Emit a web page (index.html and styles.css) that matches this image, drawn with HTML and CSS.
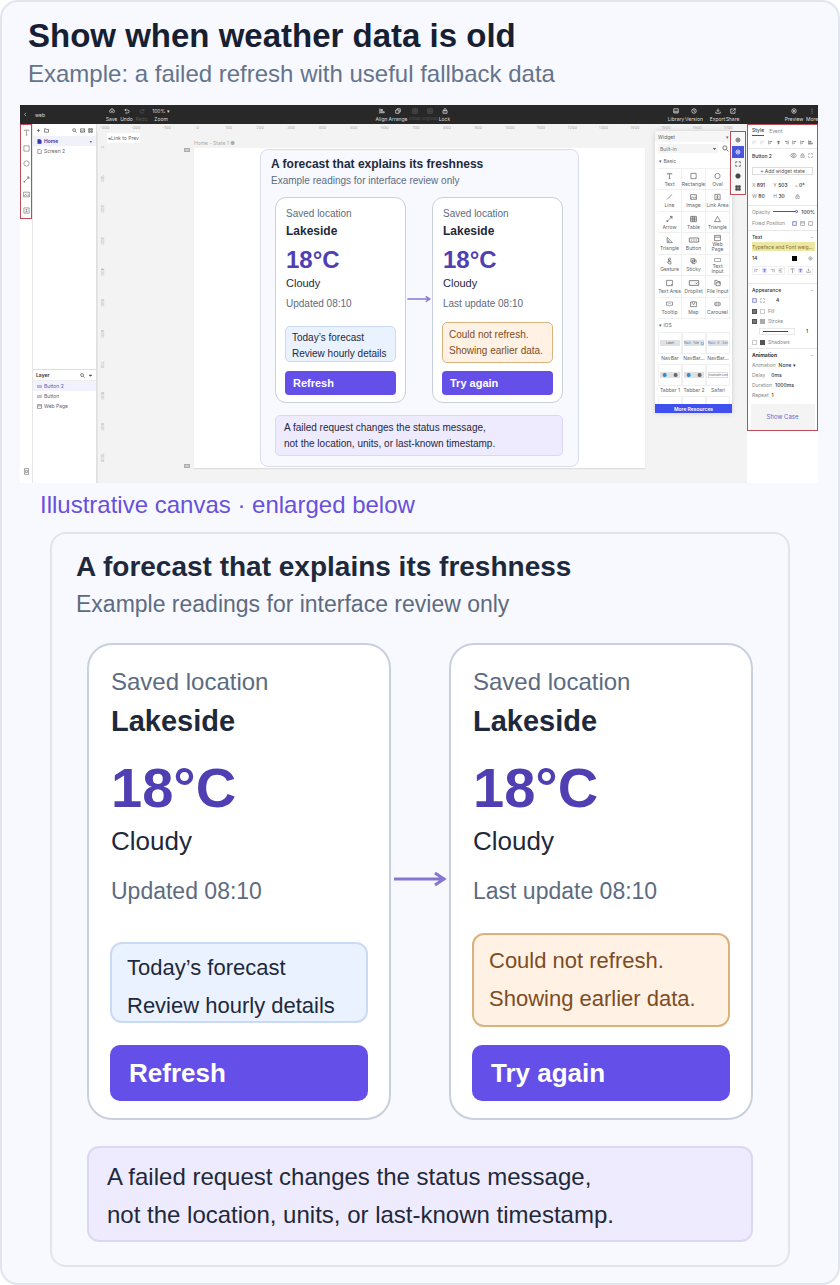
FILE: index.html
```html
<!DOCTYPE html>
<html lang="en">
<head>
<meta charset="utf-8">
<meta name="viewport" content="width=device-width, initial-scale=1">
<title>Show when weather data is old</title>
<link rel="stylesheet" href="styles.css">
</head>
<body>
<svg class="sprite" aria-hidden="true">
  <symbol id="back" viewBox="0 0 24 24"><path d="M15 4l-8 8 8 8"/></symbol>
  <symbol id="cloud" viewBox="0 0 24 24"><path d="M7 18H6a4 4 0 0 1 0-9 6 6 0 0 1 12 0 4 4 0 0 1 0 9h-1M12 21V11M9 14l3-3 3 3"/></symbol>
  <symbol id="undo" viewBox="0 0 24 24"><path d="M8 3L3 8l5 5M3 8h11a6 6 0 0 1 0 12H5"/></symbol>
  <symbol id="redo" viewBox="0 0 24 24"><path d="M16 3l5 5-5 5M21 8H10a6 6 0 0 0 0 12h9"/></symbol>
  <symbol id="align" viewBox="0 0 24 24"><path d="M3 2v20M7 6h7v4H7zM7 15h14v4H7z"/></symbol>
  <symbol id="copy" viewBox="0 0 24 24"><path d="M3 8h13v13H3zM8 8V3h13v13h-5"/></symbol>
  <symbol id="group" viewBox="0 0 24 24"><path d="M3 3h18v18H3zM3 12h18M12 3v18"/></symbol>
  <symbol id="lock" viewBox="0 0 24 24"><path d="M4 10h16v11H4zM8 10V6a4 4 0 0 1 8 0v4M12 14v3"/></symbol>
  <symbol id="library" viewBox="0 0 24 24"><path d="M3 3h18v16H3zM3 13h18M8 19v3M16 19v3"/></symbol>
  <symbol id="clock" viewBox="0 0 24 24"><circle cx="12" cy="12" r="9"/><path d="M12 6v6l4 3"/></symbol>
  <symbol id="download" viewBox="0 0 24 24"><path d="M12 2v12M7 9l5 5 5-5M3 15v6h18v-6"/></symbol>
  <symbol id="share" viewBox="0 0 24 24"><path d="M11 4H3v17h17v-8M14 3h7v7M21 3L10 14"/></symbol>
  <symbol id="play" viewBox="0 0 24 24"><circle cx="12" cy="12" r="9"/><path d="M10 8l6 4-6 4z"/></symbol>
  <symbol id="more" viewBox="0 0 24 24"><path d="M12 3v3M12 11v3M12 19v3"/></symbol>
  <symbol id="text" viewBox="0 0 24 24"><path d="M4 7V4h16v3M12 4v17M9 21h6"/></symbol>
  <symbol id="rect" viewBox="0 0 24 24"><path d="M3 3h18v18H3z"/></symbol>
  <symbol id="oval" viewBox="0 0 24 24"><circle cx="12" cy="12" r="9"/></symbol>
  <symbol id="line" viewBox="0 0 24 24"><path d="M4 20L20 4"/></symbol>
  <symbol id="arrow" viewBox="0 0 24 24"><path d="M4 20L20 4M14 3h7v7zM3 17v4h4z"/></symbol>
  <symbol id="image" viewBox="0 0 24 24"><path d="M2 4h20v16H2zM3 17l6-5 5 4 3-3 5 4M16 8h2"/></symbol>
  <symbol id="area" viewBox="0 0 24 24"><path d="M3 3h18v18H3zM12 8v8M9 10l3-3 3 3M8 16h8"/></symbol>
  <symbol id="table" viewBox="0 0 24 24"><path d="M2 3h20v18H2zM2 9h20M2 15h20M9 3v18M15 3v18"/></symbol>
  <symbol id="tri" viewBox="0 0 24 24"><path d="M12 3l10 18H2z"/></symbol>
  <symbol id="rtri" viewBox="0 0 24 24"><path d="M4 3v18h18zM8 13v4h4"/></symbol>
  <symbol id="button" viewBox="0 0 32 24"><path d="M2 6h28v12H2zM7 12h4M14 12h4M21 12h4"/></symbol>
  <symbol id="web" viewBox="0 0 24 24"><path d="M2 3h20v18H2zM2 9h20"/></symbol>
  <symbol id="gesture" viewBox="0 0 24 24"><circle cx="12" cy="6" r="4"/><path d="M10 6v10l-4-2v4l4 4h7v-8l-7-2"/></symbol>
  <symbol id="sticky" viewBox="0 0 24 24"><path d="M3 4h13v12H3zM8 9h13v8l-4 4H8zM12 13h5"/></symbol>
  <symbol id="input" viewBox="0 0 32 24"><path d="M2 5h28v14H2z"/></symbol>
  <symbol id="textarea" viewBox="0 0 24 24"><path d="M2 3h20v18H2zM17 19l3-3"/></symbol>
  <symbol id="drop" viewBox="0 0 32 24"><path d="M2 5h28v14H2zM20 11l3 3 3-3"/></symbol>
  <symbol id="file" viewBox="0 0 24 24"><path d="M3 19V3h7l2 4h9v8M7 11v10h14V11z"/></symbol>
  <symbol id="tooltip" viewBox="0 0 28 24"><path d="M2 4h24v13h-9l-3 4-3-4H2zM8 10h2M13 10h2M18 10h2"/></symbol>
  <symbol id="map" viewBox="0 0 24 24"><path d="M8 5H2v16h20V5h-6M12 15s-4-5-4-8a4 4 0 0 1 8 0c0 3-4 8-4 8z"/></symbol>
  <symbol id="carousel" viewBox="0 0 28 24"><path d="M8 5h12v14H8zM8 7H5a4 4 0 0 0 0 10h3M20 7h3a4 4 0 0 1 0 10h-3M11 12h6"/></symbol>
  <symbol id="search" viewBox="0 0 24 24"><circle cx="10" cy="10" r="7"/><path d="M15 15l7 7"/></symbol>
  <symbol id="folder" viewBox="0 0 24 24"><path d="M2 20V4h8l2 3h10v13z"/></symbol>
  <symbol id="plus" viewBox="0 0 24 24"><path d="M12 4v16M4 12h16"/></symbol>
  <symbol id="grid" viewBox="0 0 24 24"><path d="M3 3h7v7H3zM14 3h7v7h-7zM3 14h7v7H3zM14 14h7v7h-7z"/></symbol>
  <symbol id="page" viewBox="0 0 24 24"><path d="M4 2h11l5 5v15H4z"/></symbol>
  <symbol id="notes" viewBox="0 0 24 24"><path d="M5 2h14v20H5zM9 8h6v8H9z"/></symbol>
  <symbol id="caret" viewBox="0 0 24 24"><path d="M6 10l6 6 6-6z" fill="currentColor"/></symbol>
  <symbol id="eye" viewBox="0 0 24 24"><path d="M1 12s4-7 11-7 11 7 11 7-4 7-11 7S1 12 1 12z"/><circle cx="12" cy="12" r="3"/></symbol>
  <symbol id="frame" viewBox="0 0 24 24"><path d="M9 3H3v6M15 3h6v6M9 21H3v-6M15 21h6v-6"/></symbol>
  <symbol id="gear" viewBox="0 0 24 24"><circle cx="12" cy="12" r="8"/><circle cx="12" cy="12" r="3"/></symbol>
  <symbol id="disc" viewBox="0 0 24 24"><circle cx="12" cy="12" r="9" fill="currentColor"/></symbol>
  <symbol id="lines" viewBox="0 0 24 24"><path d="M3 5h18M3 12h12M3 19h18"/></symbol>
  <symbol id="al" viewBox="0 0 24 24"><path d="M4 3v18M8 7h12M8 15h7"/></symbol>
  <symbol id="ac" viewBox="0 0 24 24"><path d="M12 3v18M4 8h16M7 15h10"/></symbol>
  <symbol id="ar" viewBox="0 0 24 24"><path d="M20 3v18M4 7h12M9 15h7"/></symbol>
</svg>

<main class="sheet">
  <header class="intro">
    <h1>Show when weather data is old</h1>
    <p>Example: a failed refresh with useful fallback data</p>
  </header>

  <section class="editor" aria-label="Design editor">
    <div class="topbar">
      <button class="topbar-back" aria-label="Back"><svg class="ico ico-s"><use href="#back"/></svg></button>
      <span class="topbar-name">web</span>
      <div class="tools tools-edit">
        <button><svg class="ico"><use href="#cloud"/></svg>Save</button>
        <button><svg class="ico"><use href="#undo"/></svg>Undo</button>
        <button class="dim"><svg class="ico"><use href="#redo"/></svg>Redo</button>
        <button class="wide"><span>100% ▾</span>Zoom</button>
      </div>
      <div class="tools tools-arrange">
        <button><svg class="ico"><use href="#align"/></svg>Align</button>
        <button class="mid"><svg class="ico"><use href="#copy"/></svg>Arrange</button>
        <button class="dim small"><svg class="ico"><use href="#group"/></svg>Group</button>
        <button class="dim small"><svg class="ico"><use href="#group"/></svg>Ungroup</button>
        <button><svg class="ico"><use href="#lock"/></svg>Lock</button>
      </div>
      <div class="tools tools-share">
        <button class="mid"><svg class="ico"><use href="#library"/></svg>Library</button>
        <button class="mid"><svg class="ico"><use href="#clock"/></svg>Version</button>
      </div>
      <div class="tools tools-export">
        <button><svg class="ico"><use href="#download"/></svg>Export</button>
        <button><svg class="ico"><use href="#share"/></svg>Share</button>
      </div>
      <div class="tools tools-view">
        <button class="mid"><svg class="ico"><use href="#play"/></svg>Preview</button>
        <button class="mid"><svg class="ico"><use href="#more"/></svg>More</button>
      </div>
    </div>

    <div class="workspace">
      <div class="toolbar">
        <div class="toolbar-main marked">
          <button aria-label="Text"><svg class="ico"><use href="#text"/></svg></button>
          <button aria-label="Rectangle"><svg class="ico"><use href="#rect"/></svg></button>
          <button aria-label="Oval"><svg class="ico"><use href="#oval"/></svg></button>
          <button aria-label="Arrow"><svg class="ico"><use href="#arrow"/></svg></button>
          <button aria-label="Image"><svg class="ico"><use href="#image"/></svg></button>
          <button aria-label="Link area"><svg class="ico"><use href="#area"/></svg></button>
        </div>
        <button class="toolbar-end" aria-label="Notes"><svg class="ico"><use href="#notes"/></svg></button>
      </div>

      <div class="side">
        <div class="side-head">
          <svg class="ico ico-s"><use href="#plus"/></svg><svg class="ico ico-s"><use href="#folder"/></svg>
          <span class="push"></span>
          <svg class="ico ico-s"><use href="#search"/></svg><svg class="ico ico-s"><use href="#image"/></svg><svg class="ico ico-s"><use href="#grid"/></svg>
        </div>
        <button class="side-item current"><svg class="ico ico-s solid"><use href="#page"/></svg>Home<span class="push">•</span></button>
        <button class="side-item"><svg class="ico ico-s"><use href="#page"/></svg>Screen 2</button>
        <div class="layers">
          <div class="side-head side-title"><b>Layer</b><span class="push"></span><svg class="ico ico-s"><use href="#search"/></svg><svg class="ico ico-s"><use href="#caret"/></svg></div>
          <button class="side-item picked"><svg class="ico ico-s"><use href="#button"/></svg>Button 2</button>
          <button class="side-item"><svg class="ico ico-s"><use href="#button"/></svg>Button</button>
          <button class="side-item"><svg class="ico ico-s"><use href="#web"/></svg>Web Page</button>
        </div>
      </div>

      <div class="canvas">
        <div class="ruler-x"><i>-300</i><i>-200</i><i>-100</i><i>0</i><i>100</i><i>200</i><i>300</i><i>400</i><i>500</i><i>600</i><i>700</i><i>800</i><i>900</i><i>1000</i><i>1100</i><i>1200</i><i>1300</i><i>1400</i><i>1500</i><i>1600</i><i>1700</i></div>
        <div class="ruler-y"><i>0</i><i>100</i><i>200</i><i>300</i><i>400</i><i>500</i><i>600</i><i>700</i><i>800</i><i>900</i><i>1000</i></div>
        <div class="stage">
          <div class="stage-top">
            <button class="link-prev">◂Link to Prev</button>
            <span class="state-name">Home - State 1 ●</span>
          </div>
          <div class="board-row">
            <div class="pins"><span></span><span></span></div>
            <div class="board">
              <article class="forecast mini">
                <h2>A forecast that explains its freshness</h2>
                <p class="lead">Example readings for interface review only</p>
                <div class="pair">
                  <section class="card">
                    <p class="place-label">Saved location</p>
                    <h3>Lakeside</h3>
                    <p class="temp">18°C</p>
                    <p class="sky">Cloudy</p>
                    <p class="stamp">Updated 08:10</p>
                    <div class="box info"><p>Today’s forecast</p><p>Review hourly details</p></div>
                    <button class="action">Refresh</button>
                  </section>
                  <svg class="flow" viewBox="0 0 58 24" aria-hidden="true"><path d="M3 9h51M44 3l9 6-9 6"/></svg>
                  <section class="card">
                    <p class="place-label">Saved location</p>
                    <h3>Lakeside</h3>
                    <p class="temp">18°C</p>
                    <p class="sky">Cloudy</p>
                    <p class="stamp">Last update 08:10</p>
                    <div class="box warn"><p>Could not refresh.</p><p>Showing earlier data.</p></div>
                    <button class="action">Try again</button>
                  </section>
                </div>
                <div class="note"><p>A failed request changes the status message,</p><p>not the location, units, or last-known timestamp.</p></div>
              </article>
            </div>
          </div>
        </div>

        <div class="palette">
          <div class="palette-head"><span>Widget</span><span>▾</span></div>
          <div class="palette-find"><select aria-label="Widget library"><option>Built-in</option></select><svg class="ico"><use href="#search"/></svg></div>
          <div class="palette-group">▾ Basic</div>
          <div class="widgets">
            <button><svg class="ico"><use href="#text"/></svg>Text</button>
            <button><svg class="ico"><use href="#rect"/></svg>Rectangle</button>
            <button><svg class="ico"><use href="#oval"/></svg>Oval</button>
            <button><svg class="ico"><use href="#line"/></svg>Line</button>
            <button><svg class="ico"><use href="#image"/></svg>Image</button>
            <button><svg class="ico"><use href="#area"/></svg>Link Area</button>
            <button><svg class="ico"><use href="#arrow"/></svg>Arrow</button>
            <button><svg class="ico"><use href="#table"/></svg>Table</button>
            <button><svg class="ico"><use href="#tri"/></svg>Triangle</button>
            <button><svg class="ico"><use href="#rtri"/></svg>Triangle</button>
            <button><svg class="ico ico-w"><use href="#button"/></svg>Button</button>
            <button><svg class="ico"><use href="#web"/></svg>Web<br>Page</button>
            <button><svg class="ico"><use href="#gesture"/></svg>Gesture</button>
            <button><svg class="ico"><use href="#sticky"/></svg>Sticky</button>
            <button><svg class="ico"><use href="#input"/></svg>Text<br>Input</button>
            <button><svg class="ico"><use href="#textarea"/></svg>Text Area</button>
            <button><svg class="ico ico-w"><use href="#drop"/></svg>Droplist</button>
            <button><svg class="ico"><use href="#file"/></svg>File Input</button>
            <button><svg class="ico"><use href="#tooltip"/></svg>Tooltip</button>
            <button><svg class="ico"><use href="#map"/></svg>Map</button>
            <button><svg class="ico"><use href="#carousel"/></svg>Carousel</button>
          </div>
          <div class="palette-group">▾ iOS</div>
          <div class="bars">
            <button><span class="thumb"><i>Label</i></span>NavBar</button>
            <button><span class="thumb"><i class="blue">Back</i><i>Title</i><i class="pale"></i></span>NavBar...</button>
            <button><span class="thumb"><i class="blue">Back</i><i>☰</i><i class="blue">Edit</i></span>NavBar...</button>
            <button><span class="thumb"><i class="dot blue">●</i><i class="dot">●</i></span>Tabbar 1</button>
            <button><span class="thumb"><i class="dot blue">●</i><i class="dot">●</i></span>Tabbar 2</button>
            <button><span class="thumb safari"><i>example.com</i></span>Safari</button>
          </div>
          <div class="bars-rest"><span></span><span></span><span></span></div>
          <button class="palette-more">More Resources</button>
        </div>

        <div class="switcher marked">
          <button aria-label="Assets"><svg class="ico"><use href="#gear"/></svg></button>
          <button class="on" aria-label="Widgets"><svg class="ico"><use href="#gear"/></svg></button>
          <button aria-label="Frames"><svg class="ico"><use href="#frame"/></svg></button>
          <button aria-label="Styles"><svg class="ico"><use href="#disc"/></svg></button>
          <button aria-label="Masters"><svg class="ico solid"><use href="#grid"/></svg></button>
        </div>
      </div>

      <div class="props">
        <div class="props-main marked">
          <div class="prow tabs"><b>Style</b><span>Event</span></div>
          <div class="prow tall spread"><svg class="ico ico-s faint"><use href="#al"/></svg><svg class="ico ico-s faint"><use href="#al"/></svg><svg class="ico ico-s"><use href="#al"/></svg><svg class="ico ico-s"><use href="#ac"/></svg><svg class="ico ico-s"><use href="#ar"/></svg><svg class="ico ico-s"><use href="#al"/></svg><svg class="ico ico-s"><use href="#al"/></svg><svg class="ico ico-s"><use href="#align"/></svg></div>
          <div class="prow xtall ruled"><span class="name">Button 2</span><span class="push"></span><svg class="ico"><use href="#eye"/></svg><svg class="ico ico-s"><use href="#lock"/></svg><svg class="ico ico-s"><use href="#frame"/></svg></div>
          <div class="prow add"><button>+ Add widget state</button></div>
          <div class="prow tall thirds"><span>X <b>891</b></span><span>Y <b>503</b></span><span>⦣ <b>0°</b></span></div>
          <div class="prow thirds end"><span>W <b>80</b></span><span>H <b>30</b></span><span><svg class="ico ico-s"><use href="#lock"/></svg></span></div>
          <div class="prow tall ruled"><label for="opacity">Opacity</label><input id="opacity" type="range" value="100"><b>100%</b></div>
          <div class="prow tall last"><span>Fixed Position</span><span class="push"></span><svg class="ico ico-s tint"><use href="#rect"/></svg><svg class="ico ico-s"><use href="#web"/></svg><svg class="ico ico-s"><use href="#rect"/></svg></div>
          <div class="prow tall ruled"><b>Text</b><span class="push">–</span></div>
          <div class="prow typeface">Typeface and Font weig...</div>
          <div class="prow xtall"><b>14</b><span class="push"></span><span class="swatch black"></span><svg class="ico ico-s gapped"><use href="#gear"/></svg></div>
          <div class="prow aligns"><span class="seg"><svg class="ico ico-s"><use href="#al"/></svg><svg class="ico ico-s tint"><use href="#ac"/></svg><svg class="ico ico-s"><use href="#ar"/></svg><svg class="ico ico-s"><use href="#lines"/></svg></span><span class="seg"><svg class="ico ico-s"><use href="#text"/></svg><svg class="ico ico-s tint"><use href="#ac"/></svg><svg class="ico ico-s"><use href="#download"/></svg></span></div>
          <div class="prow tall ruled"><b>Appearance</b><span class="push">–</span></div>
          <div class="prow corners"><svg class="ico ico-s tint"><use href="#rect"/></svg><svg class="ico ico-s"><use href="#frame"/></svg><b class="gapped">4</b></div>
          <div class="prow"><input id="fill" type="checkbox" checked><span class="swatch"></span><label for="fill">Fill</label></div>
          <div class="prow"><input id="stroke" type="checkbox" checked><span class="swatch gray"></span><label for="stroke">Stroke</label></div>
          <div class="prow stroke-line"><span class="dash"></span><b>1</b></div>
          <div class="prow tall"><input id="shadows" type="checkbox"><span class="swatch dark"></span><label for="shadows">Shadows</label></div>
          <div class="prow tall ruled"><b class="strong">Animation</b><span class="push">–</span></div>
          <div class="prow"><span>Animation</span><b>None ▾</b></div>
          <div class="prow"><span>Delay</span><b class="delay">0ms</b></div>
          <div class="prow"><span>Duration</span><b>1000ms</b></div>
          <div class="prow"><span>Repeat</span><b>1</b></div>
          <button class="showcase">Show Case</button>
        </div>
      </div>
    </div>
  </section>

  <p class="caption">Illustrative canvas · enlarged below</p>

  <article class="forecast">
    <h2>A forecast that explains its freshness</h2>
    <p class="lead">Example readings for interface review only</p>
    <div class="pair">
      <section class="card">
        <p class="place-label">Saved location</p>
        <h3>Lakeside</h3>
        <p class="temp">18°C</p>
        <p class="sky">Cloudy</p>
        <p class="stamp">Updated 08:10</p>
        <div class="box info"><p>Today’s forecast</p><p>Review hourly details</p></div>
        <button class="action">Refresh</button>
      </section>
      <svg class="flow" viewBox="0 0 58 24" aria-hidden="true"><path d="M3 9h51M44 3l9 6-9 6"/></svg>
      <section class="card">
        <p class="place-label">Saved location</p>
        <h3>Lakeside</h3>
        <p class="temp">18°C</p>
        <p class="sky">Cloudy</p>
        <p class="stamp">Last update 08:10</p>
        <div class="box warn"><p>Could not refresh.</p><p>Showing earlier data.</p></div>
        <button class="action">Try again</button>
      </section>
    </div>
    <div class="note"><p>A failed request changes the status message,</p><p>not the location, units, or last-known timestamp.</p></div>
  </article>
</main>
</body>
</html>
```
FILE: styles.css
```css
* { box-sizing: border-box; }
body { margin: 0; background: #fff; color: #1e293b; font-family: "Liberation Sans", Arial, sans-serif; }
h1, h2, h3, p { margin: 0; }
button { margin: 0; padding: 0; border: 0; background: none; color: inherit; font: inherit; cursor: pointer; }
.sprite { display: none; }

.sheet { padding: 14px 0 16px; border: 2px solid #e1e5ef; border-radius: 18px; background: #f8f9ff; }
.intro { padding: 0 26px; }
.intro h1 { font-size: 33px; line-height: 40px; color: #172033; }
.intro p { margin-top: 3px; font-size: 24px; line-height: 30px; color: #64748b; }
.caption { margin: 7px 38px 12px; font-size: 24px; line-height: 30px; color: #6750dc; }

/* Forecast panel, in its full size and in the size used on the canvas */
.forecast {
  --line: 2px;
  margin: 0 48px;
  padding: 15px 35px 23px;
  border: var(--line) solid #e0e4ec;
  border-radius: 16px;
  background: #f8f9ff;
}
.forecast h2 { margin-left: -11px; font-size: 28px; line-height: 36px; }
.lead { margin: 4px 0 24px -11px; font-size: 23px; line-height: 30px; color: #5d6b80; }
.pair { display: grid; grid-template-columns: 1fr 58px 1fr; }
.card { display: flex; flex-direction: column; padding: 22px 21px 17px; border: var(--line) solid #c9d0dd; border-radius: 25px; background: #fff; }
.card > p, .card > h3 { padding-left: 1px; }
.place-label { font-size: 24px; line-height: 30px; color: #5d6b80; }
.card h3 { margin-top: 7px; font-size: 29px; line-height: 34px; }
.temp { margin-top: 18px; font-size: 56px; font-weight: 700; line-height: 64px; color: #4f3fb3; }
.sky { margin-top: 5px; font-size: 26px; line-height: 32px; }
.stamp { margin-top: 19px; font-size: 23px; line-height: 30px; color: #5d6b80; }
.box { display: flex; flex-direction: column; gap: 8px; border: var(--line) solid; border-radius: 12px; font-size: 22px; line-height: 30px; }
.info { margin: 36px 0 22px; padding: 9px 15px 0; border-color: #c9daf5; background: #ebf2ff; }
.warn { margin: 27px 0 18px; padding: 11px 15px; border-color: #dab27c; background: #fff1e4; color: #7c4d24; }
.action { padding: 12px 19px; border-radius: 10px; background: #654fe9; color: #fff; font-size: 26px; font-weight: 700; line-height: 32px; text-align: left; }
.flow { width: 100%; align-self: center; fill: none; stroke: #8775d2; stroke-width: 3; }
.note { display: flex; flex-direction: column; gap: 8px; margin-top: 26px; padding: 14px 18px 10px; border: var(--line) solid #ddd7f5; border-radius: 12px; background: #efebfe; font-size: 24px; line-height: 30px; }

.mini { --line: 1px; width: 319px; margin: 0; padding: 7px 15px 10px 14px; border-color: #d9ddeb; border-radius: 8px; }
.mini h2 { margin-left: -4px; font-size: 12px; line-height: 14px; }
.mini .lead { margin: 3px 0 9px -4px; font-size: 10px; line-height: 14px; }
.mini .pair { grid-template-columns: 1fr 26px 1fr; }
.mini .card { padding: 10px 9px 7px; border-radius: 11px; }
.mini .place-label { font-size: 10px; line-height: 12px; }
.mini h3 { margin-top: 4px; font-size: 12px; line-height: 14px; }
.mini .temp { margin-top: 8px; font-size: 24px; line-height: 28px; }
.mini .sky { margin-top: 2px; font-size: 11px; line-height: 14px; }
.mini .stamp { margin-top: 8px; font-size: 10px; line-height: 12px; }
.mini .box { gap: 2px; border-radius: 5px; font-size: 10px; line-height: 14px; }
.mini .info { margin: 16px 0 9px; padding: 4px 6px 0; }
.mini .warn { margin: 12px 0 8px; padding: 5px 6px 4px; }
.mini .action { padding: 5px 8px; border-radius: 4px; font-size: 11px; line-height: 14px; }
.mini .note { gap: 2px; margin-top: 12px; padding: 5px 8px 4px; border-radius: 5px; font-size: 10px; line-height: 14px; }

/* Editor */
.editor { margin: 16px 20px 0 18px; overflow: hidden; font-family: Inter, "Noto Sans", sans-serif; font-size: 5px; line-height: 6px; color: #666; }
.mini { font-family: "Liberation Sans", Arial, sans-serif; color: #1e293b; }
.ico { display: block; flex: none; width: 7px; height: 7px; fill: none; stroke: currentColor; stroke-width: 3; }
.ico-s { width: 5px; height: 5px; }
.ico-w { width: 12px; }
.solid { fill: currentColor; }
.push { margin-left: auto; }
.marked { border: 1px solid #bd4c56; }

.topbar { display: flex; align-items: center; height: 19px; background: #282828; color: #ddd; }
.topbar-back { width: 12px; padding-left: 3px; }
.topbar-name { width: 72px; padding-left: 3px; }
.tools { display: flex; }
.tools button { display: flex; flex-direction: column; align-items: center; gap: 2px; width: 15px; white-space: nowrap; }
.tools .ico { width: 6px; height: 6px; }
.tools .dim { color: #555; }
.tools .small { font-size: 4px; }
.tools .mid { width: 18px; }
.tools .wide { width: 24px; }
.tools-arrange { margin-left: 201px; }
.tools-share { margin-left: 215px; }
.tools-export { margin-left: 7px; }
.tools-view { margin-left: auto; margin-right: -3px; }

.workspace { display: flex; background: #fff; }
.toolbar { display: flex; flex-direction: column; justify-content: space-between; width: 12px; padding-bottom: 8px; }
.toolbar-main { display: flex; flex-direction: column; justify-content: space-around; height: 95px; }
.toolbar button { display: flex; justify-content: center; }
.toolbar .ico { stroke-width: 2; }
.side { display: flex; flex-direction: column; width: 65px; border-right: 1px solid #e0e0e0; border-left: 1px solid #e6e6e6; }
.side-head { display: flex; align-items: center; gap: 3px; height: 12px; padding: 0 3px; color: #444; }
.side-item { display: flex; align-items: center; gap: 2px; height: 10px; padding: 0 4px; text-align: left; }
.current { background: #f1f1fc; color: #3038a8; font-weight: 600; }
.picked { background: #f1f2fd; color: #5b63a8; }
.layers { display: flex; flex-direction: column; margin: auto 0 72px; border-top: 1px solid #ddd; }
.side-title { height: 11px; border-bottom: 1px solid #eee; }

.canvas { position: relative; flex: 1; display: grid; grid-template-columns: 8px 1fr; grid-template-rows: 9px 1fr; background: #f3f3f3; }
.ruler-x { grid-column: 1 / 3; display: flex; justify-content: space-between; padding: 1px 15px 0 3px; }
.ruler-x i, .ruler-y i { font-size: 4px; font-style: normal; line-height: 6px; color: #aaa; text-align: center; }
.ruler-x i { width: 8px; }
.ruler-y { display: flex; flex-direction: column; justify-content: space-between; padding: 8px 0 19px; border-left: 1px solid #e4e4e4; }
.ruler-y i { height: 12px; writing-mode: vertical-rl; }
.stage { padding-bottom: 15px; }
.stage-top { display: flex; height: 15px; }
.link-prev { width: 33px; height: 10px; margin-left: 2px; background: #fff; white-space: nowrap; }
.state-name { margin: 7px 0 0 54px; color: #aaa; }
.board-row { display: flex; padding-right: 102px; }
.pins { display: flex; flex-direction: column; justify-content: space-between; align-items: flex-end; width: 89px; padding-right: 4px; }
.pins span { width: 6px; height: 4px; border: 1px solid #aaa; background: #ccc; }
.board { flex: 1; display: flex; justify-content: center; padding: 1px 0; background: #fff; box-shadow: 0 1px 1px #ddd; }

.palette { position: absolute; top: 7px; right: 15px; width: 77px; background: #fff; box-shadow: 0 0 5px #ccc; }
.palette-head { display: flex; justify-content: space-between; padding: 3px 3px 2px; background: #f6f6f6; }
.palette-find { display: flex; align-items: center; gap: 4px; height: 13px; padding: 0 3px; }
.palette-find select { appearance: none; width: 60px; height: 9px; padding: 0 2px; border: 0; border-radius: 0; background: conic-gradient(from -45deg at 50% 100%, #777 90deg, transparent 0) 55px 4px / 3px 2px no-repeat, #f4f4f4; color: #777; font: inherit; }
.palette-group { height: 13px; padding: 3px 4px; }
.widgets { display: grid; grid-template-columns: repeat(3, 1fr); grid-template-rows: repeat(7, 1fr); height: 151px; margin: 0 2px 0 3px; border-top: 1px solid #f0f0f0; }
.widgets button { display: flex; flex-direction: column; align-items: center; justify-content: center; gap: 2px; min-width: 0; min-height: 0; border-right: 1px solid #f0f0f0; border-bottom: 1px solid #f0f0f0; line-height: 5px; white-space: nowrap; }
.widgets .ico { height: 8px; stroke-width: 2; color: #444; }
.widgets button:has(br) { gap: 0; }
.bars { display: grid; grid-template-columns: repeat(3, 1fr); margin: 0 2px 0 3px; }
.bars button { padding-bottom: 2px; line-height: 7px; white-space: nowrap; }
.thumb { display: flex; align-items: center; justify-content: space-around; height: 22px; margin-bottom: 1px; border: 1px solid #f0f0f0; background: linear-gradient(#dfe1e4, #dfe1e4) center / 20px 6px no-repeat; }
.thumb i { font-size: 3px; font-style: normal; color: #666; }
.thumb .blue { color: #3d86cf; }
.thumb .dot { font-size: 5px; }
.thumb .pale { width: 3px; height: 3px; border: 1px solid #9cb9d6; }
.safari { background: none; }
.safari i { width: 20px; border: 1px solid #ddd; line-height: 4px; }
.bars-rest { display: grid; grid-template-columns: repeat(3, 1fr); height: 8px; margin: 0 2px 0 3px; }
.bars-rest span { border: 1px solid #f0f0f0; border-bottom: 0; }
.palette-more { width: 100%; height: 9px; background: #4050ee; color: #fff; font-weight: 600; }

.switcher { position: absolute; top: 7px; right: 1px; display: flex; flex-direction: column; width: 16px; padding: 2px 1px 0; background: #f7f7f7; color: #444; }
.switcher button { display: flex; align-items: center; justify-content: center; height: 12px; }
.switcher .ico { width: 6px; height: 6px; }
.switcher .on { background: #4a55d8; color: #fff; }

.props { width: 71px; }
.prow { display: flex; align-items: center; gap: 3px; height: 10px; padding: 0 4px; color: #888; white-space: nowrap; }
.prow b { font-weight: 500; color: #333; }
.prow .strong { font-weight: 700; }
.prow .gapped { margin-left: 8px; }
.prow .delay { margin-left: 3px; }
.tall { height: 12px; }
.xtall { height: 14px; }
.ruled { border-top: 1px solid #e8e8e8; }
.last { margin-bottom: 1px; }
.end { margin-bottom: 4px; }
.name { color: #333; font-weight: 500; }
.tabs { height: 11px; gap: 5px; }
.tabs b { line-height: 9px; border-bottom: 1px solid #555; }
.spread { justify-content: space-between; color: #555; }
.faint { color: #ccc; }
.add { height: 17px; }
.add button { flex: 1; height: 8px; border: 1px solid #ddd; color: #555; }
.thirds { display: grid; grid-template-columns: repeat(3, 1fr); }
.prow input[type="range"] { appearance: none; width: 25px; height: 5px; margin: 0; background: linear-gradient(#557, #557) center / 100% 1px no-repeat; }
.prow input[type="range"]::-webkit-slider-thumb { appearance: none; width: 3px; height: 3px; border: 1px solid #557; border-radius: 50%; background: #fff; }
.prow input[type="checkbox"] { appearance: none; width: 5px; height: 5px; margin: 0; border: 1px solid #ccc; background: #fff; }
.prow input[type="checkbox"]:checked { border-color: #555; background: #777; }
.tint { color: #6670b8; background: #e8eafb; }
.typeface { height: 9px; padding: 0; margin: 0 2px 0 4px; background: #efe7a0; color: #7d7640; }
.swatch { width: 5px; height: 5px; border: 1px solid #ccc; }
.black { border-color: #000; background: #000; }
.gray { background: #aaa; border-color: #aaa; }
.dark { background: #555; border-color: #555; }
.aligns { justify-content: space-between; margin-bottom: 8px; }
.seg { display: flex; gap: 3px; padding: 1px; border: 1px solid #f0f0f0; }
.corners { margin-bottom: 1px; }
.stroke-line { justify-content: space-between; padding: 0 9px 0 11px; }
.dash { width: 36px; height: 7px; border: 1px solid #e8e8e8; background: linear-gradient(#444, #444) 3px 2px / 25px 1px no-repeat; }
.showcase { display: block; width: 64px; height: 26px; margin: 4px auto 0; background: #f4f4f5; color: #6068c8; font-size: 6px; }
```
